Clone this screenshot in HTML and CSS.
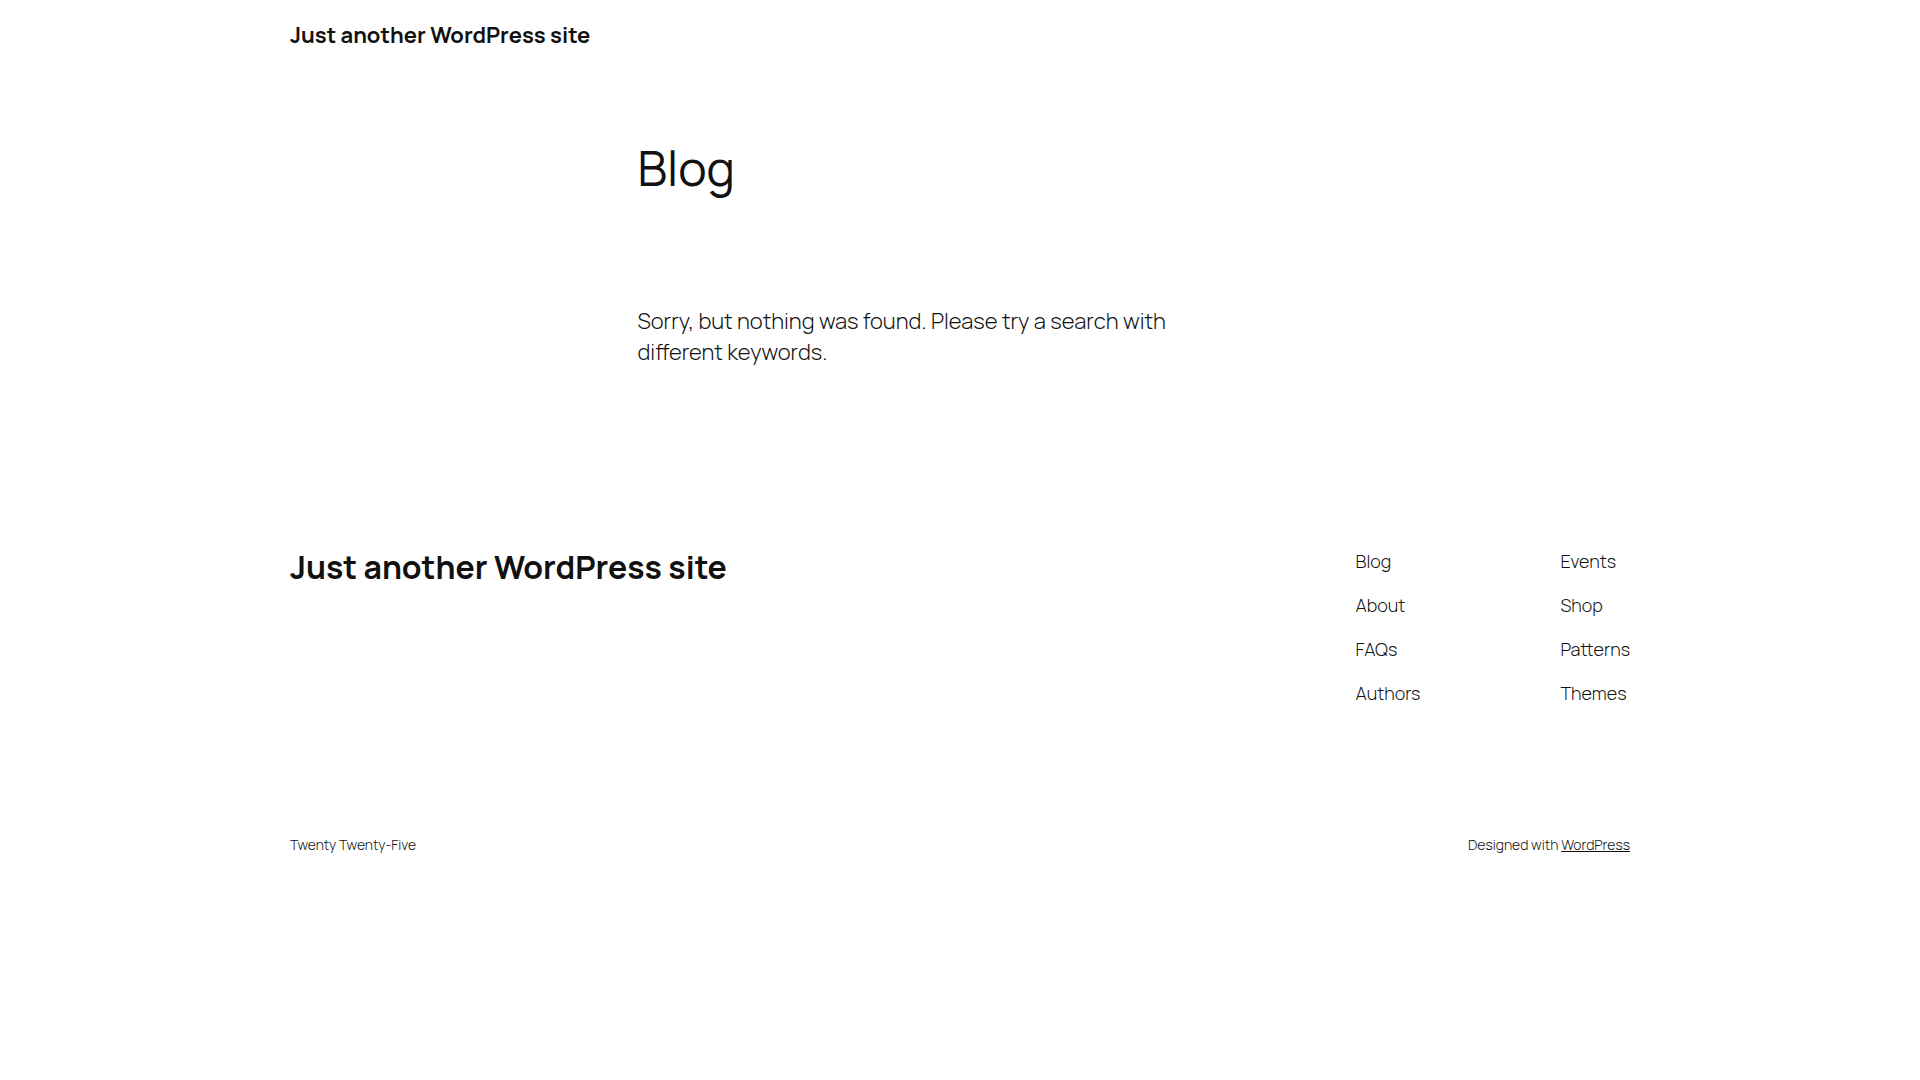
FILE: index.html
```html
<!DOCTYPE html>
<html lang="en">
<head>
<meta charset="utf-8">
<meta name="viewport" content="width=device-width, initial-scale=1">
<title>Blog</title>
<link rel="stylesheet" href="styles.css">
</head>
<body>
<header class="site-header wide">
  <p class="site-title"><a href="#">Just another WordPress site</a></p>
</header>
<main class="content">
  <h1 class="page-title">Blog</h1>
  <p class="no-results">Sorry, but nothing was found. Please try a search with different keywords.</p>
</main>
<footer class="site-footer wide">
  <div class="footer-top">
    <h2 class="footer-title"><a href="#">Just another WordPress site</a></h2>
    <div class="footer-menus">
      <nav class="menu" aria-label="About the site">
        <a href="#">Blog</a>
        <a href="#">About</a>
        <a href="#">FAQs</a>
        <a href="#">Authors</a>
      </nav>
      <nav class="menu" aria-label="More pages">
        <a href="#">Events</a>
        <a href="#">Shop</a>
        <a href="#">Patterns</a>
        <a href="#">Themes</a>
      </nav>
    </div>
  </div>
  <div class="footer-bottom">
    <p>Twenty Twenty-Five</p>
    <p>Designed with <a class="credit-link" href="#">WordPress</a></p>
  </div>
</footer>
</body>
</html>
```
FILE: styles.css
```css
* {
  box-sizing: border-box;
}

body {
  margin: 0;
  padding: 0 50px;
  background: #fff;
  color: #111;
  font-family: Manrope, Inter, sans-serif;
  font-size: 22px;
  font-weight: 300;
  line-height: 31px;
}

h1, h2, p {
  margin: 0;
}

a {
  color: inherit;
  text-decoration: none;
}

.wide {
  max-width: 1340px;
  margin: 0 auto;
}

.site-header {
  padding: 20px 0;
}

.site-title {
  font-weight: 700;
}

.content {
  max-width: 645px;
  margin: 0 auto;
  padding: 70px 0;
}

.page-title {
  font-size: 48px;
  font-weight: 400;
  line-height: 54px;
}

.no-results {
  max-width: 560px;
  padding-top: 111px;
}

.site-footer {
  padding: 111px 0 50px;
}

.footer-top {
  display: flex;
  justify-content: space-between;
  align-items: flex-start;
}

.footer-title {
  font-size: 32px;
  font-weight: 700;
  line-height: 36px;
}

.footer-menus {
  display: flex;
  gap: 140px;
}

.menu {
  display: flex;
  flex-direction: column;
  gap: 20px;
  font-size: 18px;
  line-height: 24px;
}

.footer-bottom {
  display: flex;
  justify-content: space-between;
  padding-top: 130px;
  font-size: 14px;
  line-height: 20px;
}

.credit-link {
  text-decoration: underline;
}
```
